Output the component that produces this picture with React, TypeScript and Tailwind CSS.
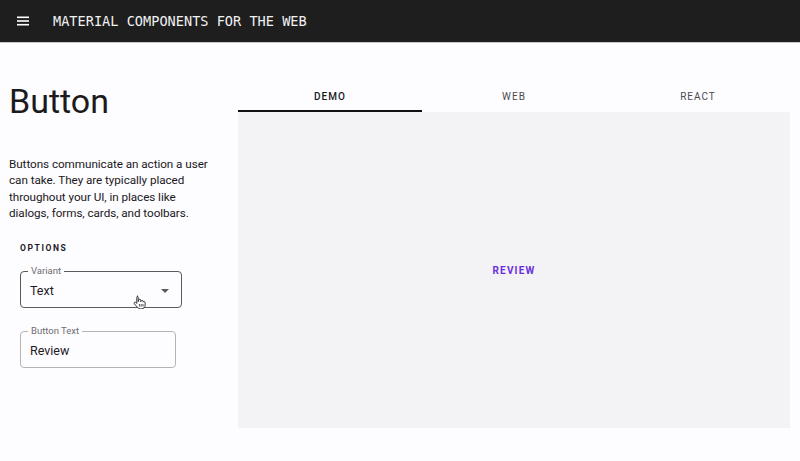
import React from "react";

const roboto = { fontFamily: "Roboto, 'Noto Sans', sans-serif" };

function MenuIcon() {
  return (
    <svg width="12" height="10" viewBox="0 0 12 10" className="text-white">
      <rect x="0" y="0.5" width="12" height="1.6" fill="currentColor" />
      <rect x="0" y="4.2" width="12" height="1.6" fill="currentColor" />
      <rect x="0" y="7.9" width="12" height="1.6" fill="currentColor" />
    </svg>
  );
}

function HandCursor() {
  return (
    <svg width="13" height="14" viewBox="0 0 13 14" className="absolute left-[133px] top-[295px]">
      <path
        d="M4 1.2c.7 0 1.2.5 1.2 1.2v4.2l.4-.1V5.2c0-.6.5-1 1.1-1s1 .5 1 1v1.3l.3-.1c0-.6.5-1 1.1-1s1 .5 1 1v.7c.2-.4.6-.6 1-.6.6 0 1 .5 1 1v2.7c0 2-1.4 3.6-3.5 3.6H7.3c-1.1 0-2-.5-2.7-1.3L1.3 8.8c-.4-.5-.3-1.1.2-1.4.4-.3 1-.3 1.4.1l.9.9V2.4c0-.7.5-1.2 1.2-1.2z"
        fill="#fff"
        stroke="#222"
        strokeWidth="0.9"
        strokeLinejoin="round"
      />
      <path d="M6.4 9v2.6M8.2 9v2.6M10 9v2.6" stroke="#222" strokeWidth="0.8" />
    </svg>
  );
}

function OutlinedField({
  label,
  value,
  width,
  dark,
  select,
}: {
  label: string;
  value: string;
  width: string;
  dark?: boolean;
  select?: boolean;
}) {
  return (
    <fieldset
      className={`relative h-[42px] rounded-[4px] border ${dark ? "border-[#5a5a5a]" : "border-[#b4b4b6]"} ${width} m-0 px-[7px] pt-0 pb-0`}
    >
      <legend className="ml-0 px-[3px] text-[9.5px] leading-[10px] text-[#6e6e72]">{label}</legend>
      <div className="mt-[1px] flex h-[28px] items-center justify-between pl-[2px] pr-[5px]">
        <span className="text-[12.5px] text-[#1d1b1f]">{value}</span>
        {select && (
          <svg width="8" height="4" viewBox="0 0 8 4">
            <path d="M0 0h8L4 4z" fill="#5a5a5e" />
          </svg>
        )}
      </div>
    </fieldset>
  );
}

export default function App() {
  return (
    <div className="relative h-[461px] w-[800px] overflow-hidden bg-[#fdfcff]" style={roboto}>
      <header className="box-content flex h-[42px] items-center gap-[24px] border-b border-[#c9c9cb] bg-[#1e1e1f] pl-[17px]">
        <MenuIcon />
        <span
          className="text-[13.6px] text-[#f1f1f1]"
          style={{ fontFamily: "'DejaVu Sans Mono', 'Liberation Mono', monospace" }}
        >
          MATERIAL COMPONENTS FOR THE WEB
        </span>
      </header>

      <div className="flex">
        <aside className="w-[238px] shrink-0 pl-[9px]">
          <h1 className="mt-[38px] text-[34px] leading-[40px] font-normal text-[#1b1b1d]">Button</h1>
          <p className="mt-[35px] whitespace-nowrap text-[11.7px] leading-[16.4px] tracking-[-0.05px] text-[#1a181c]">
            Buttons communicate an action a user
            <br />
            can take. They are typically placed
            <br />
            throughout your UI, in places like
            <br />
            dialogs, forms, cards, and toolbars.
          </p>
          <div className="pl-[11px]">
            <div className="mt-[20px] text-[8.5px] font-bold tracking-[1.6px] text-[#1d1b1f]">OPTIONS</div>
            <div className="mt-[12px]">
              <OutlinedField label="Variant" value="Text" width="w-[162px]" dark select />
            </div>
            <div className="mt-[18px]">
              <OutlinedField label="Button Text" value="Review" width="w-[156px]" />
            </div>
          </div>
        </aside>

        <section className="mr-[10px] flex-1 pt-[39px]">
          <div className="grid grid-cols-3">
            <div className="flex h-[30px] items-center justify-center border-b-2 border-[#111] text-[10px] font-medium tracking-[1px] text-[#1b1b1d]">
              DEMO
            </div>
            <div className="flex h-[30px] items-center justify-center pb-[2px] text-[10px] font-normal tracking-[1px] text-[#4a4a4e]">
              WEB
            </div>
            <div className="flex h-[30px] items-center justify-center pb-[2px] text-[10px] font-normal tracking-[1px] text-[#4a4a4e]">
              REACT
            </div>
          </div>
          <div className="flex h-[316px] items-center justify-center bg-[#f3f2f4]">
            <span className="text-[10px] font-bold tracking-[1.2px] text-[#6a2ee0]">REVIEW</span>
          </div>
        </section>
      </div>

      <HandCursor />
    </div>
  );
}
